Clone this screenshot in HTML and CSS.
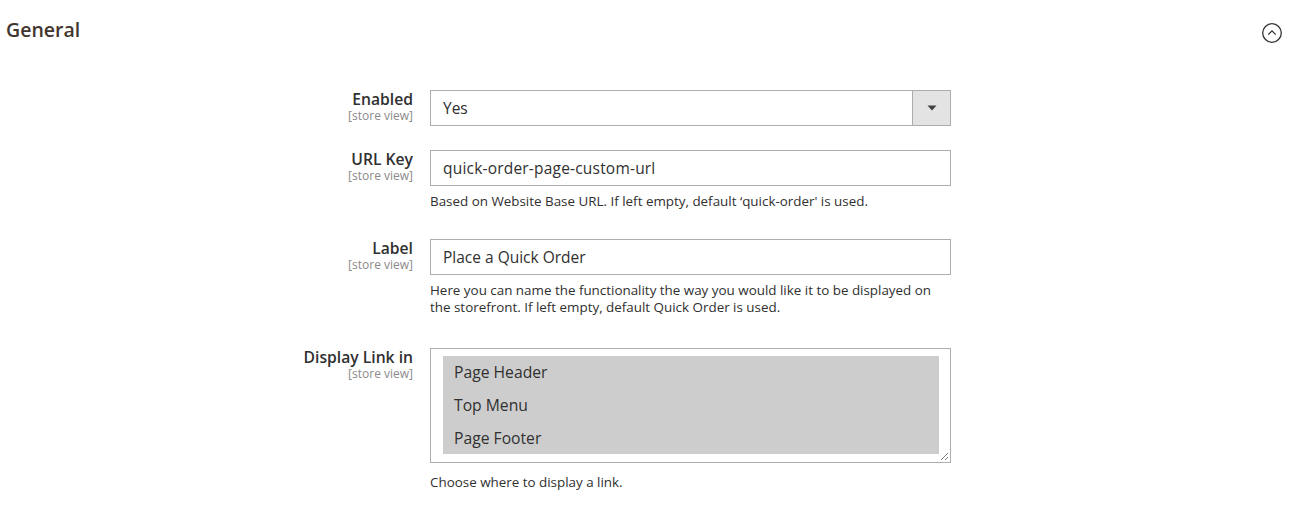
FILE: index.html
```html
<!DOCTYPE html>
<html>
<head>
<meta charset="utf-8">
<link rel="stylesheet" href="styles.css">
</head>
<body>
<div class="section">
  <div class="section-head">
    <h2 class="section-title">General</h2>
    <span class="toggle">
      <svg width="22" height="22" viewBox="0 0 22 22"><circle cx="11" cy="11" r="9.3" fill="none" stroke="#333" stroke-width="1.3"/><path d="M7.2 12.6 L11 8.9 L14.8 12.6" fill="none" stroke="#333" stroke-width="1.3"/></svg>
    </span>
  </div>
  <div class="fields">
    <div class="row row-enabled">
      <div class="label"><span class="name">Enabled</span><span class="scope">[store view]</span></div>
      <div class="control">
        <div class="select"><span class="value">Yes</span><span class="arrow"><svg width="10" height="6" viewBox="0 0 10 6"><path d="M0.5 0.5 H9.5 L5 5.5 Z" fill="#404040"/></svg></span></div>
      </div>
    </div>
    <div class="row row-url">
      <div class="label"><span class="name">URL Key</span><span class="scope">[store view]</span></div>
      <div class="control">
        <div class="input url">quick-order-page-custom-url</div>
        <div class="note">Based on Website Base URL. If left empty, default ‘quick-order' is used.</div>
      </div>
    </div>
    <div class="row row-label">
      <div class="label"><span class="name">Label</span><span class="scope">[store view]</span></div>
      <div class="control">
        <div class="input">Place a Quick Order</div>
        <div class="note">Here you can name the functionality the way you would like it to be displayed on the storefront. If left empty, default Quick Order is used.</div>
      </div>
    </div>
    <div class="row row-display">
      <div class="label"><span class="name">Display Link in</span><span class="scope">[store view]</span></div>
      <div class="control">
        <div class="multiselect">
          <div class="options">
            <div class="option">Page Header</div>
            <div class="option">Top Menu</div>
            <div class="option">Page Footer</div>
          </div>
          <svg class="grip" width="10" height="10" viewBox="0 0 10 10"><path d="M9 2 L2 9 M9 6 L6 9" stroke="#777" stroke-width="1"/></svg>
        </div>
        <div class="note">Choose where to display a link.</div>
      </div>
    </div>
  </div>
</div>
</body>
</html>
```

FILE: styles.css
```css
html, body {
  margin: 0;
  padding: 0;
  background: #ffffff;
}
body {
  font-family: "Open Sans", "Liberation Sans", sans-serif;
  color: #303030;
}
.section {
  width: 1297px;
}
.section-head {
  display: flex;
  justify-content: space-between;
  align-items: center;
  padding: 16px 14px 0 6px;
  height: 28px;
}
.section-title {
  margin: 0;
  font-size: 19.5px;
  font-weight: 600;
  color: #41362f;
  line-height: 26px;
}
.toggle {
  display: flex;
  margin-top: 5px;
}
.fields {
  padding-top: 46px;
}
.row {
  display: grid;
  grid-template-columns: 413px 521px;
  column-gap: 17px;
}
.label {
  display: flex;
  flex-direction: column;
  align-items: flex-end;
  text-align: right;
  margin-top: -1px;
}
.name {
  font-size: 15.7px;
  font-weight: 600;
  line-height: 20px;
  color: #303030;
}
.scope {
  font-size: 12px;
  line-height: 13px;
  color: #8a8a8a;
}
.select, .input {
  box-sizing: border-box;
  height: 36px;
  border: 1px solid #adadad;
  display: flex;
  align-items: center;
  font-size: 15.5px;
  color: #303030;
}
.input {
  padding-left: 12px;
}
.input.url {
  letter-spacing: 0.2px;
}
.select .value {
  flex: 1;
  padding-left: 12px;
}
.select .arrow {
  width: 38px;
  height: 100%;
  box-sizing: border-box;
  border-left: 1px solid #adadad;
  background: #e3e3e3;
  display: flex;
  align-items: center;
  justify-content: center;
}
.note {
  font-size: 13.4px;
  line-height: 17px;
  color: #303030;
  margin-top: 7px;
  padding-right: 8px;
}
.row-enabled {
  margin-bottom: 24px;
}
.row-url {
  margin-bottom: 29px;
}
.row-label {
  margin-bottom: 32px;
}
.multiselect {
  position: relative;
  box-sizing: border-box;
  height: 115px;
  border: 1px solid #adadad;
  padding: 7px 11px 7px 12px;
}
.options {
  background: #cdcdcd;
  height: 98px;
  display: flex;
  flex-direction: column;
  justify-content: space-around;
  padding-left: 11px;
}
.option {
  font-size: 15.7px;
  line-height: 20px;
  color: #303030;
}
.grip {
  position: absolute;
  right: 1px;
  bottom: 1px;
}
.row-display .note {
  margin-top: 11px;
}
```
